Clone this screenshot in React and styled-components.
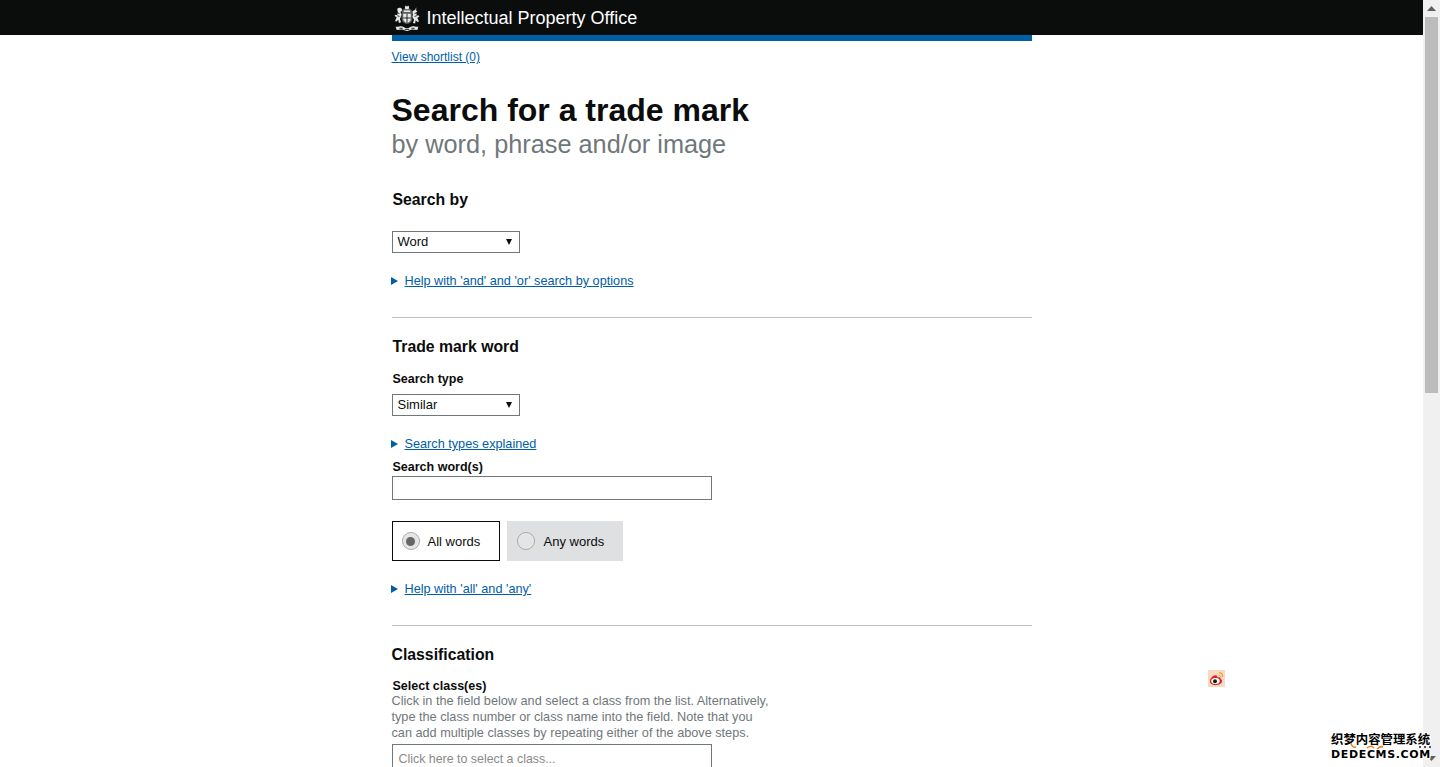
import React from "react";
import styled, { createGlobalStyle } from "styled-components";

const GlobalStyle = createGlobalStyle`
  html, body {
    margin: 0;
    padding: 0;
    height: 767px;
    overflow: hidden;
    background: #fff;
    font-family: "Liberation Sans", Arial, sans-serif;
    color: #0b0c0c;
  }
`;

const Viewport = styled.div`
  display: flex;
  width: 1440px;
  height: 767px;
  overflow: hidden;
  position: relative;
`;

const Page = styled.div`
  flex: 1;
  min-width: 0;
  overflow: hidden;
`;

const Scrollbar = styled.div`
  width: 17px;
  background: #f0f0f0;
  display: flex;
  flex-direction: column;
  align-items: center;
`;

const Thumb = styled.div`
  width: 13px;
  height: 376px;
  background: #bcbcbc;
`;

const ScrollTrack = styled.div`
  flex: 1;
`;

const ArrowBtn = styled.div`
  height: 17px;
  width: 17px;
  display: flex;
  align-items: center;
  justify-content: center;
`;

const Header = styled.header`
  background: #0b0c0c;
  height: 35px;
`;

const HeaderInner = styled.div`
  width: 640px;
  margin: 0 auto;
  height: 35px;
  display: flex;
  align-items: center;
  padding-left: 2px;
  box-sizing: border-box;
  gap: 7px;
`;

const OfficeName = styled.span`
  color: #fff;
  font-size: 18px;
  line-height: 35px;
  margin-top: 2px;
`;

const Main = styled.main`
  width: 640px;
  margin: 0 auto;
`;

const BlueBar = styled.div`
  height: 6px;
  background: #005ea5;
`;

const Link = styled.a`
  color: #005ea5;
  text-decoration: underline;
  font-size: ${(p) => p.$size || 12.7}px;
`;

const ShortlistRow = styled.div`
  height: 15px;
  line-height: 15px;
  margin-top: 7px;
`;

const Title = styled.h1`
  margin: 29px 0 0;
  font-size: 32px;
  line-height: 36px;
  font-weight: 700;
`;

const Subtitle = styled.div`
  font-size: 25.3px;
  line-height: 32px;
  color: #6f777b;
`;

const Section = styled.section`
  border-bottom: ${(p) => (p.$last ? "none" : "1px solid #bfc1c3")};
  padding-bottom: ${(p) => p.$pb || 0}px;
`;

const SectionTitle = styled.h2`
  margin: ${(p) => p.$mt || 0}px 0 0 ${(p) => (p.$flush ? 0 : 1)}px;
  font-size: 15.8px;
  line-height: 20px;
  font-weight: 700;
`;

const Label = styled.label`
  display: block;
  margin: ${(p) => p.$mt || 0}px 0 0 1px;
  font-size: 12.5px;
  line-height: 14px;
  font-weight: 700;
`;

const SelectBox = styled.div`
  width: 128px;
  height: 22px;
  box-sizing: border-box;
  border: 1px solid #6f777b;
  margin-top: ${(p) => p.$mt || 0}px;
  padding: 0 7px 2px 5px;
  display: flex;
  align-items: center;
  justify-content: space-between;
  font-size: 13px;
`;

const Caret = styled.span`
  width: 0;
  height: 0;
  margin-top: 2px;
  border-left: 3px solid transparent;
  border-right: 3px solid transparent;
  border-top: 6px solid #0b0c0c;
`;

const HelpRow = styled.div`
  display: flex;
  align-items: center;
  height: 14px;
  margin-top: ${(p) => p.$mt || 0}px;
  gap: 7px;
`;

const HelpMarker = styled.span`
  width: 0;
  height: 0;
  margin-left: -1px;
  border-top: 4px solid transparent;
  border-bottom: 4px solid transparent;
  border-left: 7px solid #005ea5;
`;

const TextInput = styled.div`
  width: 320px;
  height: 24px;
  box-sizing: border-box;
  border: 1px solid #6f777b;
  margin-top: 2px;
`;

const RadioRow = styled.div`
  display: flex;
  gap: 7px;
  margin-top: 21px;
`;

const RadioOption = styled.div`
  height: 40px;
  box-sizing: border-box;
  width: ${(p) => p.$w}px;
  display: flex;
  align-items: center;
  gap: ${(p) => (p.$selected ? 8 : 9)}px;
  font-size: 13px;
  padding-left: ${(p) => (p.$selected ? 9 : 10)}px;
  border: ${(p) => (p.$selected ? "1px solid #0b0c0c" : "none")};
  background: ${(p) => (p.$selected ? "#fff" : "#dee0e2")};
`;

const RadioDot = styled.span`
  width: 18px;
  height: 18px;
  box-sizing: border-box;
  border-radius: 50%;
  border: 1px solid #a8a8a8;
  background: #e4e4e4;
  box-shadow: inset 0 0 0 1px #ececec;
  display: flex;
  align-items: center;
  justify-content: center;
  &::after {
    content: "";
    display: ${(p) => (p.$on ? "block" : "none")};
    width: 9px;
    height: 9px;
    border-radius: 50%;
    background: #666;
  }
`;

const Hint = styled.p`
  margin: 0;
  width: 380px;
  font-size: 12.7px;
  line-height: 16px;
  color: #6f777b;
`;

const ClassInput = styled.div`
  width: 320px;
  height: 40px;
  box-sizing: border-box;
  border: 1px solid #6f777b;
  margin-top: 3px;
  padding: 7px 6px;
  font-size: 12.4px;
  line-height: 14px;
  color: #8a8a8a;
`;

const WeiboBadge = styled.div`
  position: absolute;
  left: 1208px;
  top: 670px;
  width: 17px;
  height: 17px;
  background: #f9d9c4;
`;

const Watermark = styled.div`
  position: absolute;
  left: 1331px;
  top: 733px;
  width: 100px;
  color: #000;
  text-shadow: 1px 0 0 #fff, -1px 0 0 #fff, 0 1px 0 #fff, 0 -1px 0 #fff, 1px 1px 0 #fff,
    -1px -1px 0 #fff, 1px -1px 0 #fff, -1px 1px 0 #fff;
`;

const WatermarkCn = styled.div`
  font-family: "Noto Sans CJK SC", sans-serif;
  font-weight: 700;
  font-size: 12.4px;
  line-height: 13px;
  white-space: nowrap;
`;

const WatermarkEn = styled.div`
  font-family: "DejaVu Sans", sans-serif;
  font-weight: 700;
  font-size: 11px;
  line-height: 13px;
  margin-top: 2px;
  white-space: nowrap;
  letter-spacing: 0.65px;
`;

const WatermarkArcs = styled.svg`
  position: absolute;
  left: 18px;
  top: 9px;
`;

const Crest = () => (
  <svg width="26" height="26" viewBox="1.500 1 23 24">
    <g fill="#e8e8e8">
      <path d="M11 2.500l1-1 1 1 1-1 1 1-.500 2.500h-3z" />
      <path d="M10 6h6v1.500h-6z" />
      <path d="M8 8.500a5 5 0 0 1 10 0v5a5 5 0 0 1-10 0z" opacity=".35" />
      <path d="M9.500 9h7v5c0 2-1.800 3-3.500 3.800-1.700-.800-3.500-1.800-3.500-3.800z" />
      <path d="M4 4.500c1.500-1.500 4-1 4.500.500.300 1-.500 2-1.500 2.500l1 2.500-1.500 4 1 3-2 .500-.500-3-2 2-1-1 1.500-3-2-1.500 1-1 1.500.500.500-2.500z" />
      <path d="M21.500 3l-1 2.500c-1.500 0-2.500 1-2.500 2l.500 2-.500 2.500 1.500 2.500-1 3 2 .500.500-3 2 2 1-1-1.500-3 2-1.500-1-1-1.500.500-.500-3 1-1-1-1z" />
      <path d="M2.500 21c2 .500 3.500-.500 5-.500 2 0 3.500 2 5.500 2s3.500-2 5.500-2c1.500 0 3 1 5 .500l-1 3c-1.500 0-3-.500-4.500-.500-2 0-3.500 1.500-5 1.500s-3-1.500-5-1.500c-1.500 0-3 .500-4.500.500z" />
    </g>
    <g stroke="#0b0c0c" strokeWidth=".8" fill="none">
      <path d="M13 9v9M9.500 13h7" />
      <path d="M4 8l2 1M4 11l2 .500M22 8l-2 1M22 11l-2 .500" />
      <path d="M6 22.500h3M17 22.500h3M11 23.500h4" />
    </g>
  </svg>
);

const WeiboIcon = () => (
  <svg width="17" height="17" viewBox="0 0 17 17">
    <path d="M11 3c2.500-.500 4 1.500 3.500 4" stroke="#f0a030" strokeWidth="1.200" fill="none" />
    <path d="M11 5.500c1.200-.200 1.800.600 1.500 1.800" stroke="#f0a030" strokeWidth="1" fill="none" />
    <path d="M2 10.500C2.500 8 6 4.500 8.500 5.500c1 .500.500 2 .500 2 2-.800 4-.300 3.500 1.500 1 .300 1.500 1 1.500 2 0 2.500-3 4-6.500 4S1.500 13.500 2 10.500z" fill="#d8201c" />
    <ellipse cx="7.500" cy="11" rx="4.300" ry="3" fill="#fff" />
    <circle cx="7" cy="11.300" r="2" fill="#1a1a1a" />
  </svg>
);

const App = () => (
  <Viewport>
    <GlobalStyle />
    <Page>
      <Header>
        <HeaderInner>
          <Crest />
          <OfficeName>Intellectual Property Office</OfficeName>
        </HeaderInner>
      </Header>
      <Main>
        <BlueBar />
        <ShortlistRow>
          <Link href="#" $size={12}>View shortlist (0)</Link>
        </ShortlistRow>
        <Title>Search for a trade mark</Title>
        <Subtitle>by word, phrase and/or image</Subtitle>

        <Section $pb={29}>
          <SectionTitle $mt={30}>Search by</SectionTitle>
          <SelectBox $mt={21}>
            Word
            <Caret />
          </SelectBox>
          <HelpRow $mt={21}>
            <HelpMarker />
            <Link href="#">Help with 'and' and 'or' search by options</Link>
          </HelpRow>
        </Section>

        <Section $pb={29}>
          <SectionTitle $mt={19}>Trade mark word</SectionTitle>
          <Label $mt={15}>Search type</Label>
          <SelectBox $mt={8}>
            Similar
            <Caret />
          </SelectBox>
          <HelpRow $mt={21}>
            <HelpMarker />
            <Link href="#">Search types explained</Link>
          </HelpRow>
          <Label $mt={9}>Search word(s)</Label>
          <TextInput />
          <RadioRow>
            <RadioOption $selected $w={108}>
              <RadioDot $on />
              All words
            </RadioOption>
            <RadioOption $w={116}>
              <RadioDot />
              Any words
            </RadioOption>
          </RadioRow>
          <HelpRow $mt={21}>
            <HelpMarker />
            <Link href="#">Help with 'all' and 'any'</Link>
          </HelpRow>
        </Section>

        <Section $last>
          <SectionTitle $mt={19} $flush>Classification</SectionTitle>
          <Label $mt={14}>Select class(es)</Label>
          <Hint>
            Click in the field below and select a class from the list. Alternatively,
            type the class number or class name into the field. Note that you
            can add multiple classes by repeating either of the above steps.
          </Hint>
          <ClassInput>Click here to select a class...</ClassInput>
        </Section>
      </Main>
    </Page>
    <Scrollbar>
      <ArrowBtn>
        <svg width="9" height="6" viewBox="0 0 9 6"><path d="M4.500 0L9 5H0z" fill="#606060" /></svg>
      </ArrowBtn>
      <Thumb />
      <ScrollTrack />
      <ArrowBtn>
        <svg width="9" height="6" viewBox="0 0 9 6"><path d="M4.500 5L9 0H0z" fill="#606060" /></svg>
      </ArrowBtn>
    </Scrollbar>
    <WeiboBadge><WeiboIcon /></WeiboBadge>
    <Watermark>
      <WatermarkArcs width="90" height="10" viewBox="0 0 90 10">
        <path d="M2 1c0 3 3 5 5 4M18 6c2-2 5-2 7 0M28 7c2-2 4-3 6-2" stroke="#f07a10" strokeWidth="1.500" fill="none" />
        <path d="M70 5h2M75 5h2M80 5h2" stroke="#555" strokeWidth="2" fill="none" />
      </WatermarkArcs>
      <WatermarkCn>织梦内容管理系统</WatermarkCn>
      <WatermarkEn>DEDECMS.COM</WatermarkEn>
    </Watermark>
  </Viewport>
);

export default App;
